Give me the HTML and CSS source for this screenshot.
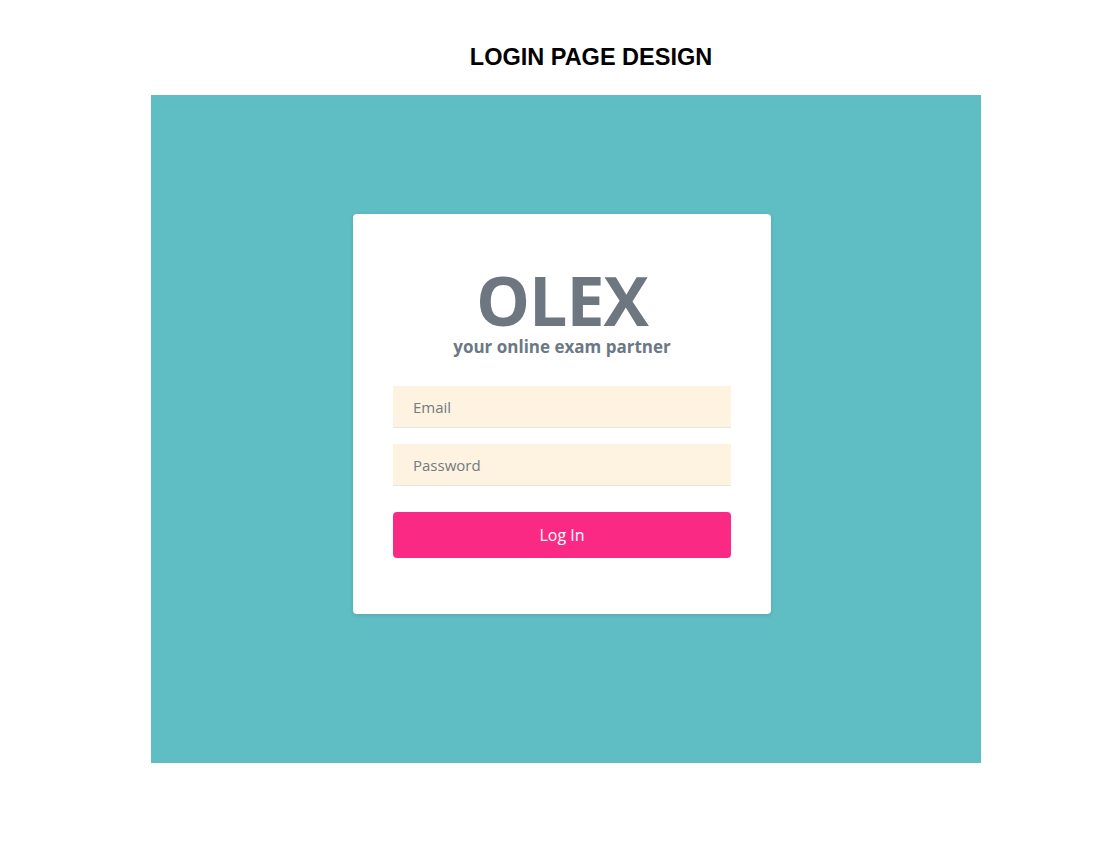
FILE: index.html
```html
<!DOCTYPE html>
<html>
<head>
<meta charset="utf-8">
<link rel="stylesheet" href="styles.css">
</head>
<body>
<h1 class="page-title">LOGIN PAGE DESIGN</h1>
<div class="stage">
  <div class="card">
    <div class="brand">OLEX</div>
    <div class="tagline">your online exam partner</div>
    <form class="form">
      <input class="field" type="email" placeholder="Email">
      <input class="field" type="password" placeholder="Password">
      <button class="btn" type="button">Log In</button>
    </form>
  </div>
</div>
</body>
</html>
```
FILE: styles.css
```css
html, body { margin: 0; padding: 0; background: #fff; }
body { padding: 0 119px 0 151px; }
.page-title {
  margin: 0;
  padding: 43px 0 0 50px;
  height: 95px;
  box-sizing: border-box;
  text-align: center;
  font-family: "Liberation Sans", Arial, sans-serif;
  font-weight: bold;
  font-size: 23.5px;
  line-height: 28px;
  color: #000;
}
.stage {
  width: 830px;
  height: 668px;
  background: #5fbdc4;
  box-sizing: border-box;
  padding: 119px 0 0 202px;
}
.card {
  width: 418px;
  height: 400px;
  box-sizing: border-box;
  background: #fff;
  border-radius: 4px;
  box-shadow: 0 1px 4px rgba(0,0,0,0.12);
  padding: 54px 40px 0;
  font-family: "Open Sans", "Noto Sans", sans-serif;
}
.brand {
  text-align: center;
  font-weight: bold;
  font-size: 68px;
  line-height: 64px;
  color: #6e7780;
  letter-spacing: -1px;
}
.tagline {
  text-align: center;
  font-weight: bold;
  font-size: 17px;
  line-height: 22px;
  color: #6b7886;
  margin-top: 4px;
}
.form {
  display: flex;
  flex-direction: column;
  margin-top: 28px;
}
.field {
  height: 42px;
  box-sizing: border-box;
  border: 0;
  border-bottom: 1px solid #e4e6e8;
  background: #fdf3e0;
  padding: 0 20px;
  font-family: "Open Sans", "Noto Sans", sans-serif;
  font-size: 15px;
  color: #495057;
  outline: none;
  margin: 0 0 16px;
}
.field::placeholder { color: #727a82; }
.btn {
  margin-top: 10px;
  height: 46px;
  border: 0;
  border-radius: 4px;
  background: #fa2a84;
  color: #fff;
  font-family: "Open Sans", "Noto Sans", sans-serif;
  font-size: 16px;
}
```
